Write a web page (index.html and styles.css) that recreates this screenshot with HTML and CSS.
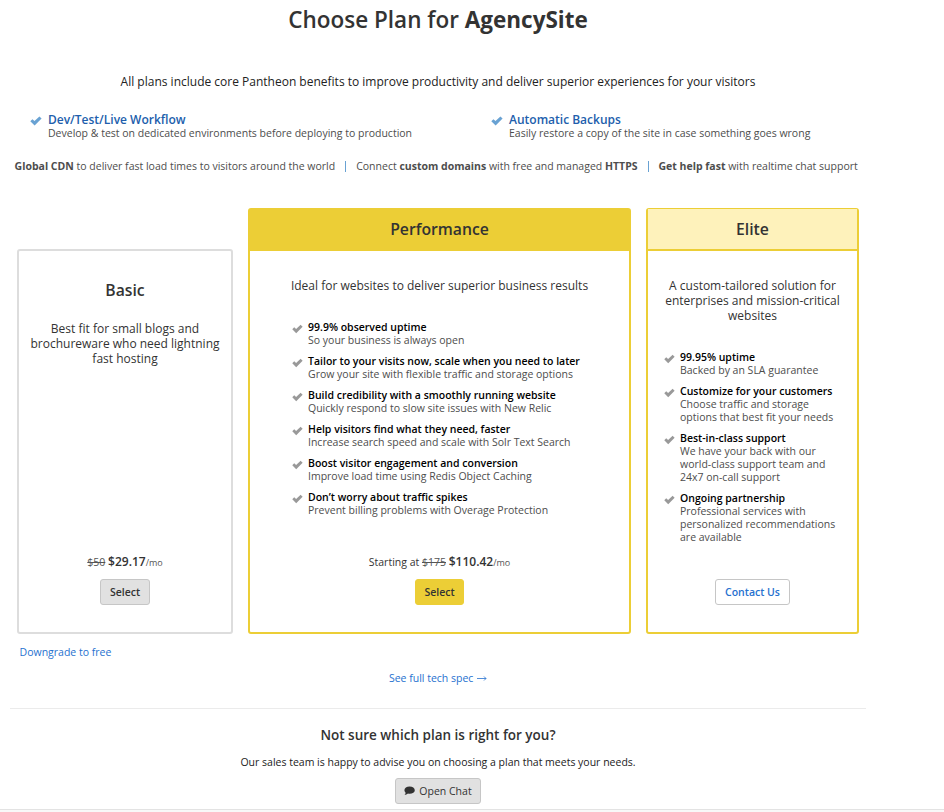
FILE: index.html
```html
<!DOCTYPE html>
<html lang="en">
<head>
<meta charset="utf-8">
<title>Choose Plan</title>
<link rel="stylesheet" href="styles.css">
</head>
<body>
<svg class="defs" aria-hidden="true">
  <symbol id="check" viewBox="0 0 12 10"><path d="M0.3 5.3 2.400 3.200 4.500 5.100 9.400 0.400 11.600 2.500 4.600 9.500z"/></symbol>
</svg>
<main class="page">
  <h1 class="title">Choose Plan for <b>AgencySite</b></h1>
  <p class="intro">All plans include core Pantheon benefits to improve productivity and deliver superior experiences for your visitors</p>

  <div class="benefits">
    <div class="benefit"><svg class="check"><use href="#check"/></svg><div><h2>Dev/Test/Live Workflow</h2><p>Develop &amp; test on dedicated environments before deploying to production</p></div></div>
    <div class="benefit"><svg class="check"><use href="#check"/></svg><div><h2>Automatic Backups</h2><p>Easily restore a copy of the site in case something goes wrong</p></div></div>
  </div>

  <div class="extras">
    <span><b>Global CDN</b> to deliver fast load times to visitors around the world</span><i></i><span>Connect <b>custom domains</b> with free and managed <b>HTTPS</b></span><i></i><span><b>Get help fast</b> with realtime chat support</span>
  </div>

  <div class="plans">
    <section class="plan basic">
      <h3>Basic</h3>
      <p class="desc">Best fit for small blogs and<br>brochureware who need lightning<br>fast hosting</p>
      <div class="buy">
        <p class="price"><s>$50</s> <b>$29.17</b><small>/mo</small></p>
        <button class="btn strong">Select</button>
      </div>
    </section>

    <section class="plan performance">
      <h3 class="head">Performance</h3>
      <p class="desc">Ideal for websites to deliver superior business results</p>
      <ul class="features">
        <li><svg class="check"><use href="#check"/></svg><h4>99.9% observed uptime</h4><p>So your business is always open</p></li>
        <li><svg class="check"><use href="#check"/></svg><h4>Tailor to your visits now, scale when you need to later</h4><p>Grow your site with flexible traffic and storage options</p></li>
        <li><svg class="check"><use href="#check"/></svg><h4>Build credibility with a smoothly running website</h4><p>Quickly respond to slow site issues with New Relic</p></li>
        <li><svg class="check"><use href="#check"/></svg><h4>Help visitors find what they need, faster</h4><p>Increase search speed and scale with Solr Text Search</p></li>
        <li><svg class="check"><use href="#check"/></svg><h4>Boost visitor engagement and conversion</h4><p>Improve load time using Redis Object Caching</p></li>
        <li><svg class="check"><use href="#check"/></svg><h4>Don’t worry about traffic spikes</h4><p>Prevent billing problems with Overage Protection</p></li>
      </ul>
      <div class="buy">
        <p class="price">Starting at <s>$175</s> <b>$110.42</b><small>/mo</small></p>
        <button class="btn strong gold">Select</button>
      </div>
    </section>

    <section class="plan elite">
      <h3 class="head">Elite</h3>
      <p class="desc">A custom-tailored solution for<br>enterprises and mission-critical<br>websites</p>
      <ul class="features">
        <li><svg class="check"><use href="#check"/></svg><h4>99.95% uptime</h4><p>Backed by an SLA guarantee</p></li>
        <li><svg class="check"><use href="#check"/></svg><h4>Customize for your customers</h4><p>Choose traffic and storage<br>options that best fit your needs</p></li>
        <li><svg class="check"><use href="#check"/></svg><h4>Best-in-class support</h4><p>We have your back with our<br>world-class support team and<br>24x7 on-call support</p></li>
        <li><svg class="check"><use href="#check"/></svg><h4>Ongoing partnership</h4><p>Professional services with<br>personalized recommendations<br>are available</p></li>
      </ul>
      <div class="buy">
        <button class="btn strong outline">Contact Us</button>
      </div>
    </section>
  </div>

  <a class="downgrade">Downgrade to free</a>
  <a class="spec">See full tech spec <svg class="arrow" viewBox="0 0 10 7"><path d="M0 3.500H9M7 1.500 9 3.500 7 5.500"/></svg></a>

  <footer class="help">
    <h2>Not sure which plan is right for you?</h2>
    <p>Our sales team is happy to advise you on choosing a plan that meets your needs.</p>
    <button class="btn chat"><svg class="bubble" viewBox="0 0 11 10"><path d="M5.600 0.600C8.600 0.600 10.800 2.200 10.800 4.200S8.600 7.800 5.600 7.800C5 7.800 4.500 7.700 4 7.600 3 8.500 1.700 9 0.500 9 1.200 8.400 1.600 7.500 1.600 6.700 0.800 6 0.400 5.200 0.400 4.200 0.400 2.200 2.600 0.600 5.600 0.600z"/></svg>Open Chat</button>
  </footer>
</main>
<div class="bottom"></div>
</body>
</html>
```
FILE: styles.css
```css
* { box-sizing: border-box; margin: 0; padding: 0; }
body { background: #fff; color: #333; font-family: "Open Sans", sans-serif; font-size: 10.5px; height: 812px; overflow: hidden; white-space: nowrap; }
.defs { display: none; }
.page { width: 856px; height: 809px; margin-left: 10px; display: flex; flex-direction: column; }
.title { font-size: 22.5px; font-weight: 600; line-height: 30px; margin-top: 5px; text-align: center; }
.title b { font-weight: 700; }
.intro { font-size: 12px; line-height: 18px; margin-top: 38px; text-align: center; color: #222; height: 18px; }
.check { width: 12px; height: 10px; flex: none; fill: #999; }

.benefits { display: flex; margin: 21px 0 0 20px; height: 28px; }
.benefit { width: 461px; flex: none; display: flex; gap: 6px; }
.benefit .check { fill: #69a2d3; margin-top: 4px; }
.benefit h2 { font-size: 12px; font-weight: 600; line-height: 15px; color: #215eac; }
.benefit p { line-height: 13px; color: #4d4d4d; }

.extras { display: flex; align-items: center; height: 16px; margin-top: 18px; margin-left: 4.6px; color: #4d4d4d; }
.extras b { font-weight: 700; }
.extras i { flex: none; width: 1px; height: 11px; background: #69a2d3; margin: 0 10px; }

.plans { display: flex; align-items: flex-end; margin: 34px 0 0 7px; height: 426px; }
.plan { flex: none; display: flex; flex-direction: column; align-items: center; border: 2px solid #ddd; border-radius: 3px; }
.basic { width: 216px; height: 385px; margin-right: 15px; }
.performance { width: 383px; height: 426px; border-color: #ecce36; margin-right: 15px; }
.elite { width: 213px; height: 426px; border-color: #ecce36; border-top-width: 1px; }
.plan h3 { font-size: 15.75px; font-weight: 600; line-height: 22px; }
.basic h3 { margin: 28px 0 20px; }
.plan .head { width: 100%; height: 41px; line-height: 38px; text-align: center; border-bottom: 2px solid #ecce36; margin-bottom: 27px; }
.performance .head { background: #ecce36; }
.elite .head { background: #fef2bb; height: 42px; line-height: 40px; }
.desc { font-size: 12px; line-height: 15px; text-align: center; }
.features { list-style: none; margin-top: 28px; display: flex; flex-direction: column; gap: 8px; }
.performance .features { align-self: stretch; padding-left: 42px; }
.elite .features { align-self: stretch; padding-left: 16px; }
.features li { display: grid; grid-template-columns: 12px auto; column-gap: 4px; justify-content: start; }
.features .check { grid-row: span 2; margin-top: 3px; width: 11px; }
.features h4 { font-size: 10.5px; font-weight: 600; line-height: 13px; color: #000; }
.features p { line-height: 13px; color: #4d4d4d; }
.buy { margin-top: auto; margin-bottom: 27px; display: flex; flex-direction: column; align-items: center; }
.price { line-height: 16px; margin-bottom: 8px; }
.price s { color: #555; }
.price b { font-size: 12px; font-weight: 600; }
.price small { font-size: 9px; color: #555; }
.btn { font: 400 10.5px/16px "Open Sans", sans-serif; height: 26px; padding: 4px 9px; color: #333; background: #e1e1e1; border: 1px solid #c6c6c6; border-radius: 3px; display: flex; align-items: center; }
.strong { font-weight: 600; }
.gold { background: #ecce36; border-color: #ecce36; padding: 4px 8px; }
.outline { background: #fff; color: #2671cf; }

.downgrade { margin: 10px 0 0 9.6px; line-height: 16px; color: #2671cf; }
.spec { align-self: center; margin-top: 10px; line-height: 16px; color: #2671cf; }
.arrow { width: 10px; height: 7px; margin-left: 1px; fill: none; stroke: #2671cf; stroke-width: 0.8; }
.help { border-top: 1px solid #ebebeb; margin-top: 22px; display: flex; flex-direction: column; align-items: center; }
.help h2 { font-size: 13.5px; font-weight: 600; line-height: 20px; margin-top: 16px; }
.help p { line-height: 16px; margin: 9px 0 8px; color: #222; }
.chat { width: 86px; padding: 4px 0; justify-content: center; }
.bubble { width: 11px; height: 10px; margin-right: 4px; fill: #333; }
.bottom { height: 3px; background: #f8f8f8; border-top: 1px solid #e3e3e3; }
```
